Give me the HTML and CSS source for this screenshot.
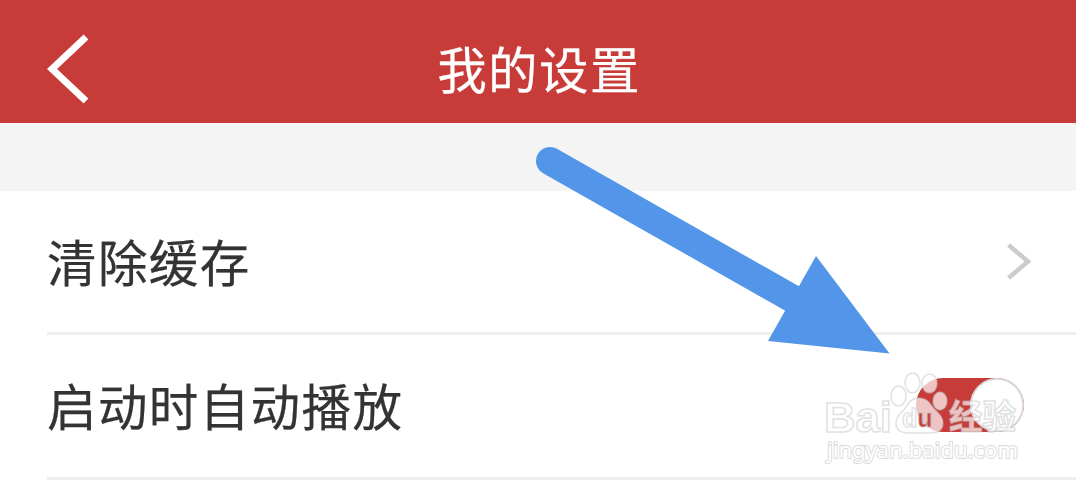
FILE: index.html
```html
<!DOCTYPE html>
<html lang="zh-CN">
<head>
    <meta charset="UTF-8">
    <meta name="viewport" content="width=device-width, initial-scale=1.0">
    <title>我的设置</title>
    <link rel="stylesheet" href="styles.css">
</head>
<body>
    <header class="header">
        <svg class="back" width="42" height="70" viewBox="0 0 42 70">
            <path d="M39 3 L5 35 L39 67"/>
        </svg>
        <h1 class="title">我的设置</h1>
    </header>
    <main class="settings">
        <div class="row">
            <span class="label">清除缓存</span>
            <svg class="chevron" width="26" height="38" viewBox="0 0 26 38">
                <path d="M3.500 2 L23 18.500 L3.500 35"/>
            </svg>
        </div>
        <div class="row">
            <span class="label">启动时自动播放</span>
            <div class="toggle"><div class="knob"></div></div>
        </div>
    </main>

    <!-- 箭头 -->
    <svg class="arrow" width="1076" height="488" viewBox="0 0 1076 488">
        <path class="arrow-line" d="M550 161 L800 303"/>
        <path class="arrow-head" d="M816 256 L889.500 353.500 L768 341 Z"/>
    </svg>

    <!-- 水印 -->
    <svg class="watermark" width="220" height="110" viewBox="820 365 220 110">
        <text class="brand" x="824" y="432" textLength="68" lengthAdjust="spacingAndGlyphs">Bai</text>
        <ellipse cx="898.500" cy="396" rx="7.500" ry="10"/>
        <ellipse cx="912.500" cy="383" rx="7.500" ry="10"/>
        <ellipse cx="929.500" cy="383.500" rx="7.500" ry="9.500"/>
        <ellipse cx="940" cy="401" rx="7" ry="9"/>
        <path d="M918 398 C912 398 909 402 906 407 C902 413 896 415 896 423 C896 430 901 433 909 433 L930 433 C938 433 943 430 943 423 C943 415 936 412 931 405 C928 400 924 398 918 398 Z"/>
        <text class="du" x="902" y="427">d<tspan class="du-u">u</tspan></text>
        <text class="cn" x="949" y="429" textLength="67" lengthAdjust="spacingAndGlyphs">经验</text>
        <text class="site" x="827" y="458" textLength="191" lengthAdjust="spacingAndGlyphs">jingyan.baidu.com</text>
    </svg>
</body>
</html>
```
FILE: styles.css
```css
body {
    margin: 0;
    height: 488px;
    position: relative;
    overflow: hidden;
    background-color: #fff;
    font-family: "Noto Sans CJK SC", sans-serif;
}

.header {
    display: grid;
    grid-template-columns: 1fr auto 1fr;
    align-items: center;
    height: 123px;
    padding: 15px 45px 0 47px;
    box-sizing: border-box;
    background-color: #c73c39;
    color: #fff;
}

.title,
.label {
    font-size: 49.5px;
    font-weight: 400;
    line-height: 76px;
    letter-spacing: 1.4px;
    -webkit-text-stroke: 0.25px currentColor;
}

.back path {
    fill: none;
    stroke: #fff;
    stroke-width: 7;
}

.title {
    margin: 0 0 2px;
}

.settings {
    border-top: 68px solid #f4f4f4;
}

.row {
    display: flex;
    align-items: center;
    justify-content: space-between;
    height: 144px;
    margin-left: 47px;
    padding-right: 45px;
    box-sizing: border-box;
    border-bottom: 3px solid #eee;
}

.row + .row {
    height: 145px;
    padding-right: 52px;
}

.label {
    margin-bottom: 2px;
    color: #333;
}

.chevron path {
    fill: none;
    stroke: #ccc;
    stroke-width: 4.5;
}

.toggle {
    display: flex;
    justify-content: flex-end;
    width: 108px;
    height: 54px;
    margin-bottom: 2px;
    border-radius: 27px;
    background-color: #c73c39;
}

.knob {
    width: 54px;
    height: 54px;
    box-sizing: border-box;
    border: 2px solid #ddd;
    border-radius: 50%;
    background-color: #fff;
}

.arrow {
    position: absolute;
    top: 0;
    left: 0;
}

.arrow-line {
    fill: none;
    stroke: #5295e9;
    stroke-width: 28;
    stroke-linecap: round;
}

.arrow-head {
    fill: #5295e9;
}

.watermark {
    position: absolute;
    top: 365px;
    left: 820px;
    fill: rgba(255, 255, 255, 0.7);
    stroke: rgba(195, 195, 195, 0.5);
    stroke-width: 1.5;
}

.brand,
.du {
    font-family: "Liberation Sans", sans-serif;
    font-weight: 700;
}

.brand {
    font-size: 43px;
}

.du {
    font-size: 25px;
}

/* 红色底上的字母 */
.du-u {
    fill: #c73c39;
}

.cn {
    font-size: 34px;
    font-weight: 700;
}

.site {
    font-family: "Noto Sans", sans-serif;
    font-size: 22px;
    fill: #fff;
    stroke: #dcdcdc;
    stroke-width: 2;
    paint-order: stroke;
}
```
